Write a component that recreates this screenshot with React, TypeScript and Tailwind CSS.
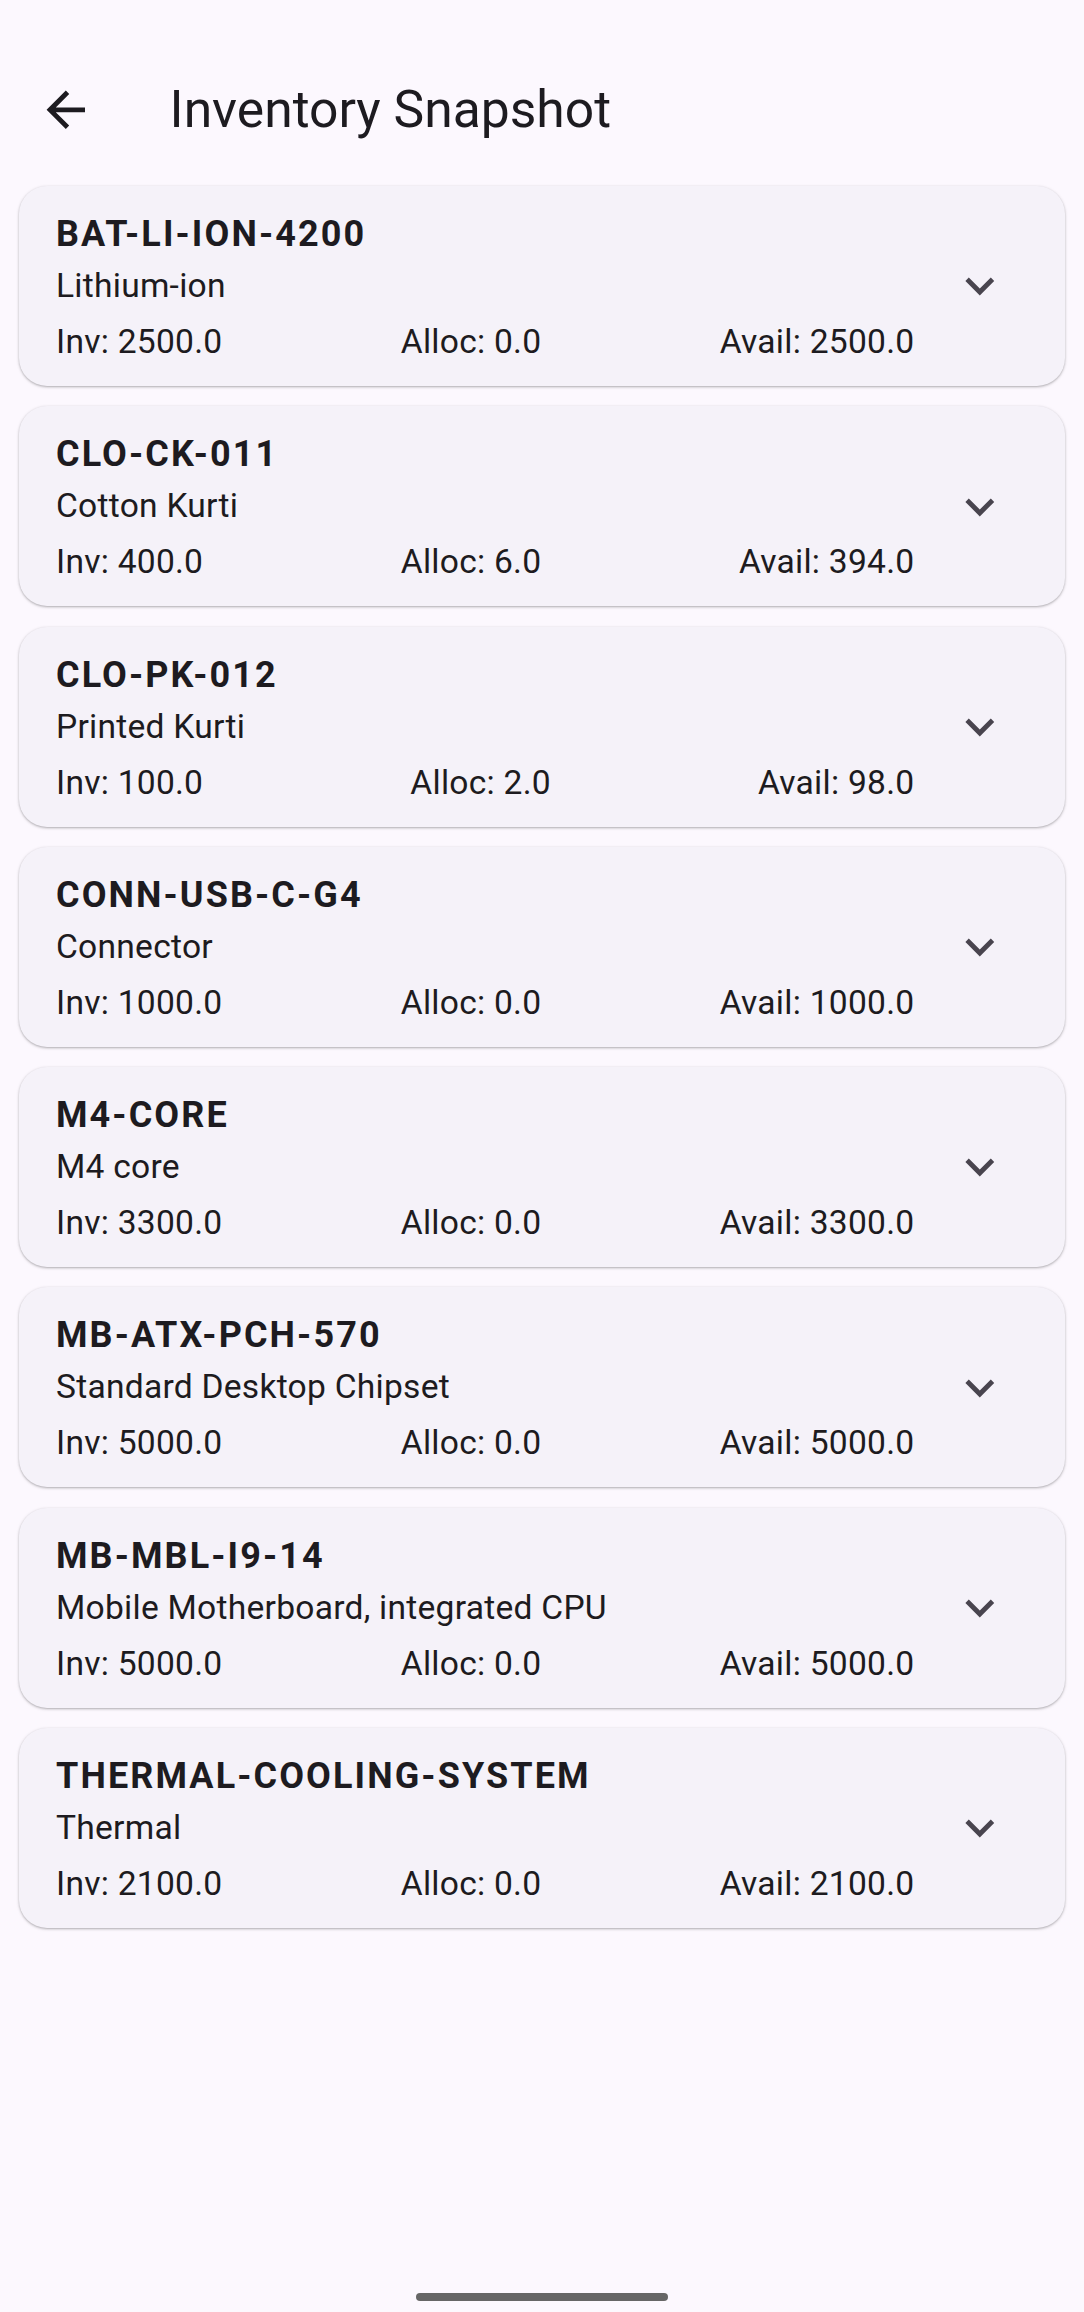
import React from 'react'

const items = [
  { code: 'BAT-LI-ION-4200', name: 'Lithium-ion', inv: '2500.0', alloc: '0.0', avail: '2500.0' },
  { code: 'CLO-CK-011', name: 'Cotton Kurti', inv: '400.0', alloc: '6.0', avail: '394.0' },
  { code: 'CLO-PK-012', name: 'Printed Kurti', inv: '100.0', alloc: '2.0', avail: '98.0' },
  { code: 'CONN-USB-C-G4', name: 'Connector', inv: '1000.0', alloc: '0.0', avail: '1000.0' },
  { code: 'M4-CORE', name: 'M4 core', inv: '3300.0', alloc: '0.0', avail: '3300.0' },
  { code: 'MB-ATX-PCH-570', name: 'Standard Desktop Chipset', inv: '5000.0', alloc: '0.0', avail: '5000.0' },
  { code: 'MB-MBL-I9-14', name: 'Mobile Motherboard, integrated CPU', inv: '5000.0', alloc: '0.0', avail: '5000.0' },
  { code: 'THERMAL-COOLING-SYSTEM', name: 'Thermal', inv: '2100.0', alloc: '0.0', avail: '2100.0' },
]

function BackArrow() {
  return (
    <svg viewBox="0 0 24 24" className="w-[57.6px] h-[57.6px]" fill="#1d1b20">
      <path d="M20 11H7.83l5.59-5.59L12 4l-8 8 8 8 1.41-1.41L7.83 13H20v-2z" />
    </svg>
  )
}

function ExpandMore() {
  return (
    <svg viewBox="0 0 24 24" className="w-[57.6px] h-[57.6px]" fill="#49454f">
      <path d="M16.59 8.59L12 13.17 7.41 8.59 6 10l6 6 6-6z" />
    </svg>
  )
}

type Item = (typeof items)[number]

function StockCard({ item }: { item: Item }) {
  return (
    <div className="h-[200px] rounded-[28px] bg-[#f5f2f9] shadow-[0_1px_2px_rgba(0,0,0,0.22),0_1px_3px_1px_rgba(0,0,0,0.08)] pl-[37px] pr-[56px] flex items-center">
      <div className="flex-1 flex flex-col pt-[24px] pb-[20px] h-full">
        <p className="text-[36px] leading-[48px] font-bold text-[#1d1b20] tracking-[2.1px]">{item.code}</p>
        <p className="mt-[4px] text-[33.6px] leading-[48px] text-[#1d1b20] tracking-[0.25px]">{item.name}</p>
        <div className="mt-[8px] flex justify-between text-[33.6px] leading-[48px] text-[#1d1b20] tracking-[0.25px]">
          <span>Inv: {item.inv}</span>
          <span>Alloc: {item.alloc}</span>
          <span>Avail: {item.avail}</span>
        </div>
      </div>
      <div className="ml-[37px]">
        <ExpandMore />
      </div>
    </div>
  )
}

export default function App() {
  return (
    <div className="h-[2312px] bg-[#fcf8fe] flex flex-col font-['Roboto',sans-serif]">
      <div className="pt-[34px]">
        <div className="h-[152px] flex items-center">
          <div className="ml-[37px]">
            <BackArrow />
          </div>
          <h1 className="ml-[75px] text-[51.6px] leading-[64px] text-[#1d1b20] font-normal">Inventory Snapshot</h1>
        </div>
      </div>
      <div className="px-[19px] flex flex-col gap-[20.3px]">
        {items.map((item) => (
          <StockCard key={item.code} item={item} />
        ))}
      </div>
      <div className="flex-1" />
      <div className="flex justify-center pb-[11px]">
        <div className="w-[252px] h-[8px] rounded-full bg-[#666666]" />
      </div>
    </div>
  )
}
